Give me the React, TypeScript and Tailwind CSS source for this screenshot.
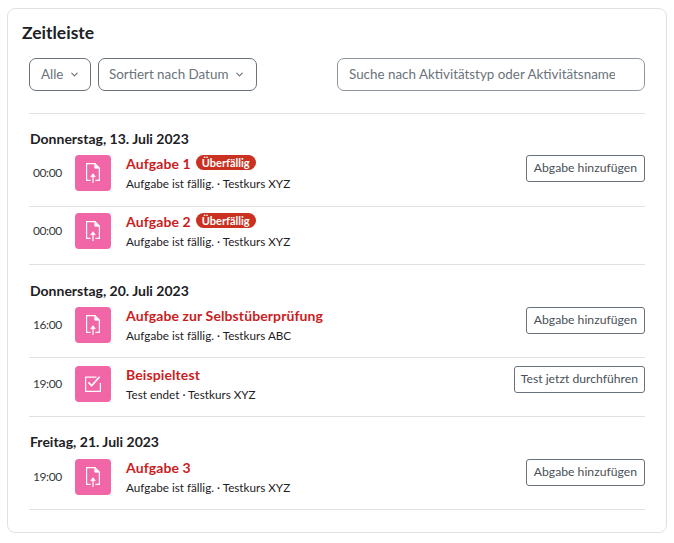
import { ChevronDown } from "lucide-react";

function UploadIcon() {
  return (
    <svg width="14" height="20" viewBox="0 0 14 20" fill="none" stroke="white" strokeWidth="1.2">
      <path d="M4.6 17.4H0.6V0.6H9L13.4 5V17.4H9.4" />
      <path d="M8.8 0.8V5.2H13.2" fill="white" strokeWidth="0.8" />
      <path d="M7 20V11" />
      <path d="M4.4 13.8L7 10.6L9.6 13.8Z" fill="white" strokeWidth="0.4" />
    </svg>
  );
}

function QuizIcon() {
  return (
    <svg width="16" height="16" viewBox="0 0 16 16" fill="none" stroke="white" strokeWidth="1.2">
      <path d="M11.5 1.2H0.6V15.4H15.4V7" />
      <path d="M3.5 6.4L6.6 9.8L14.6 0.8" strokeWidth="1.7" />
    </svg>
  );
}

type Item = {
  time: string;
  title: string;
  sub: string;
  action?: string;
  overdue?: boolean;
  quiz?: boolean;
  cls: string;
};

function Row({ item }: { item: Item }) {
  return (
    <div className={`flex border-b border-[#dee2e6] ${item.cls}`}>
      <div className="w-[46px] pt-[9px] pl-[4px] text-[12px] tracking-[-0.4px] leading-[18px] text-[#343a40]">{item.time}</div>
      <div className="w-[36px] h-[36px] rounded-[4px] bg-[#f066a6] flex items-center justify-center shrink-0">
        {item.quiz ? <QuizIcon /> : <UploadIcon />}
      </div>
      <div className="ml-[15px] flex-1 -mt-[2px]">
        <div className="flex items-center h-[20px]">
          <span className="font-bold text-[14px] text-[#ca1d1f] tracking-[0.1px]">{item.title}</span>
          {item.overdue && (
            <span className="ml-[5px] -mt-[2px] h-[15px] px-[6px] rounded-full bg-[#ca3120] text-white text-[11px] font-bold leading-[15px]">
              Überfällig
            </span>
          )}
        </div>
        <div className="text-[11.7px] leading-[18px] mt-[1px] text-[#1d2125]">{item.sub}</div>
      </div>
      {item.action && (
        <button className={`h-[27px] ${item.quiz ? "px-[6px]" : "px-[7px]"} border border-[#6a737b] rounded-[3px] text-[12.2px] text-[#495057] bg-white`}>
          {item.action}
        </button>
      )}
    </div>
  );
}

function DateHead({ label, cls }: { label: string; cls: string }) {
  return <h5 className={`font-bold text-[14px] leading-[18px] pl-[1px] text-[#1d2125] ${cls}`}>{label}</h5>;
}

export default function App() {
  return (
    <div className="w-[674px] h-[543px] bg-white pt-[8px] pl-[7px] font-['Lato',sans-serif]">
      <div className="w-[660px] h-[525px] border border-[#dee2e6] rounded-[8px] px-[21px] pt-[12px]">
        <h4 className="font-bold text-[17.5px] leading-[24px] text-[#1d2125] -ml-[7px]">Zeitleiste</h4>
        <div className="flex mt-[13px] gap-[7px] h-[33px]">
          <button className="w-[62px] border border-[#6a737b] rounded-[7px] flex items-center pl-[11px] gap-[6px] text-[13.4px] text-[#6a737b]">
            Alle <ChevronDown size={11} strokeWidth={2.5} />
          </button>
          <button className="w-[159px] border border-[#6a737b] rounded-[7px] flex items-center pl-[10px] gap-[6px] text-[13.4px] text-[#6a737b] whitespace-nowrap">
            Sortiert nach Datum <ChevronDown size={11} strokeWidth={2.5} />
          </button>
          <div className="ml-auto w-[308px] border border-[#8f959e] rounded-[7px] flex items-center pl-[11px] pr-[29px] text-[13.4px] text-[#6a737b] overflow-hidden whitespace-nowrap">
            <span className="overflow-hidden">Suche nach Aktivitätstyp oder Aktivitätsname</span>
          </div>
        </div>
        <div className="mt-[22px] border-t border-[#dee2e6]" />
        <DateHead label="Donnerstag, 13. Juli 2023" cls="mt-[16px] mb-[7px]" />
        <Row item={{ time: "00:00", title: "Aufgabe 1", sub: "Aufgabe ist fällig. · Testkurs XYZ", action: "Abgabe hinzufügen", overdue: true, cls: "h-[52px]" }} />
        <Row item={{ time: "00:00", title: "Aufgabe 2", sub: "Aufgabe ist fällig. · Testkurs XYZ", overdue: true, cls: "h-[58px] pt-[6px]" }} />
        <DateHead label="Donnerstag, 20. Juli 2023" cls="mt-[17px] mb-[7px]" />
        <Row item={{ time: "16:00", title: "Aufgabe zur Selbstüberprüfung", sub: "Aufgabe ist fällig. · Testkurs ABC", action: "Abgabe hinzufügen", cls: "h-[51px]" }} />
        <Row item={{ time: "19:00", title: "Beispieltest", sub: "Test endet · Testkurs XYZ", action: "Test jetzt durchführen", quiz: true, cls: "h-[59px] pt-[8px]" }} />
        <DateHead label="Freitag, 21. Juli 2023" cls="mt-[16px] mb-[8px]" />
        <Row item={{ time: "19:00", title: "Aufgabe 3", sub: "Aufgabe ist fällig. · Testkurs XYZ", action: "Abgabe hinzufügen", cls: "h-[51px]" }} />
      </div>
    </div>
  );
}
